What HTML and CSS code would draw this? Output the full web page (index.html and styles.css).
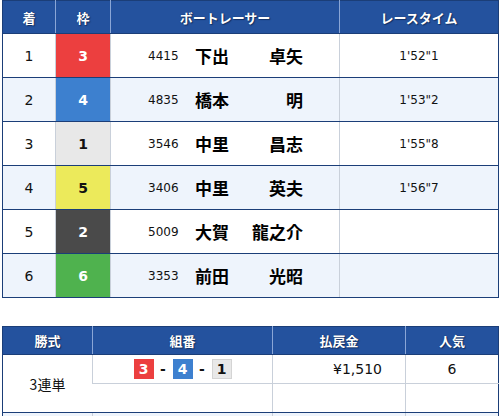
FILE: index.html
```html
<!DOCTYPE html>
<html lang="ja">
<head>
<meta charset="utf-8">
<link rel="stylesheet" href="styles.css">
</head>
<body>
<div class="page">
  <table class="result">
    <colgroup>
      <col class="c-rank"><col class="c-frame"><col class="c-racer"><col class="c-time">
    </colgroup>
    <thead>
      <tr><th>着</th><th>枠</th><th>ボートレーサー</th><th>レースタイム</th></tr>
    </thead>
    <tbody>
      <tr><td class="num">1</td><td class="frame f3">3</td><td class="racer"><span class="reg">4415</span><span class="name"><span>下出</span><span>卓矢</span></span></td><td class="time">1'52"1</td></tr>
      <tr class="alt"><td class="num">2</td><td class="frame f4">4</td><td class="racer"><span class="reg">4835</span><span class="name"><span>橋本</span><span>明</span></span></td><td class="time">1'53"2</td></tr>
      <tr><td class="num">3</td><td class="frame f1">1</td><td class="racer"><span class="reg">3546</span><span class="name"><span>中里</span><span>昌志</span></span></td><td class="time">1'55"8</td></tr>
      <tr class="alt"><td class="num">4</td><td class="frame f5">5</td><td class="racer"><span class="reg">3406</span><span class="name"><span>中里</span><span>英夫</span></span></td><td class="time">1'56"7</td></tr>
      <tr><td class="num">5</td><td class="frame f2">2</td><td class="racer"><span class="reg">5009</span><span class="name"><span>大賀</span><span>龍之介</span></span></td><td class="time"></td></tr>
      <tr class="alt"><td class="num">6</td><td class="frame f6">6</td><td class="racer"><span class="reg">3353</span><span class="name"><span>前田</span><span>光昭</span></span></td><td class="time"></td></tr>
    </tbody>
  </table>

  <table class="payout">
    <colgroup>
      <col class="p-type"><col class="p-combo"><col class="p-amount"><col class="p-pop">
    </colgroup>
    <thead>
      <tr><th>勝式</th><th>組番</th><th>払戻金</th><th>人気</th></tr>
    </thead>
    <tbody>
      <tr>
        <td class="type" rowspan="2">3連単</td>
        <td class="combo"><span class="box f3">3</span><span class="dash">-</span><span class="box f4">4</span><span class="dash">-</span><span class="box f1">1</span></td>
        <td class="amount">¥1,510</td>
        <td class="pop">6</td>
      </tr>
      <tr class="sub"><td class="combo"></td><td class="amount"></td><td class="pop"></td></tr>
    </tbody>
    <tbody>
      <tr class="alt">
        <td class="type" rowspan="2"></td>
        <td class="combo"></td>
        <td class="amount"></td>
        <td class="pop"></td>
      </tr>
      <tr class="alt sub"><td class="combo"></td><td class="amount"></td><td class="pop"></td></tr>
    </tbody>
  </table>
</div>
</body>
</html>
```

FILE: styles.css
```css
html, body {
  margin: 0;
  padding: 0;
  background: #fff;
}

.page {
  padding: 0 3px 0 2px;
  font-family: "DejaVu Sans", "Noto Sans CJK JP", sans-serif;
  color: #111;
}

table {
  width: 496px;
  border-collapse: collapse;
  table-layout: fixed;
  border: 1px solid #1b3e78;
}

th {
  height: 32px;
  padding: 0;
  font-family: "Noto Sans CJK JP", sans-serif;
  font-size: 13px;
  font-weight: 700;
  color: #fff;
  text-shadow: 0 0 1px #0d2550, 1px 1px 1px rgba(8, 30, 70, 0.6);
  background-color: #24519c;
  background-image: repeating-conic-gradient(#2d5eac 0 25%, #1c4690 0 50%);
  background-size: 2px 2px;
  border-left: 1px solid #8aa6d6;
  border-bottom: 1px solid #1b3e78;
  text-align: center;
  vertical-align: middle;
}

th:first-child { border-left: none; }

td {
  padding: 0;
  text-align: center;
  vertical-align: middle;
  border-left: 1px solid #c9d0da;
  border-bottom: 1px solid #1b3e78;
}

td:first-child { border-left: none; }

.alt td { background: #eef4fc; }

/* result table */
.c-rank { width: 53px; }
.c-frame { width: 55px; }
.c-racer { width: 229px; }
.c-time { width: 159px; }

.result tbody td { height: 43px; }

.num {
  font-size: 14px;
}

.frame {
  font-size: 14px;
  font-weight: 700;
  font-family: "DejaVu Sans", sans-serif;
}

.result .f1 { background: #e8e8e8; color: #111; }
.result .f2 { background: #4a4a4a; color: #fff; }
.result .f3 { background: #ec3f3f; color: #fff; }
.result .f4 { background: #3d80cf; color: #fff; }
.result .f5 { background: #ecea5b; color: #111; }
.result .f6 { background: #4fb24e; color: #fff; }

.racer {
  text-align: left;
}

.racer .reg {
  display: inline-block;
  width: 36px;
  margin-left: 37px;
  font-size: 12px;
  vertical-align: middle;
}

.racer .name {
  display: inline-flex;
  justify-content: space-between;
  width: 108px;
  margin-left: 11px;
  font-family: "Noto Sans CJK JP", sans-serif;
  font-size: 17px;
  font-weight: 700;
  color: #000;
  vertical-align: middle;
}

.time {
  font-size: 12px;
}

/* payout table */
.payout { margin-top: 28px; }

.payout th { height: 27px; }

.p-type { width: 90px; }
.p-combo { width: 180px; }
.p-amount { width: 133px; }
.p-pop { width: 93px; }

.payout tbody td { height: 28px; }

.payout tr:first-child td:not(.type) { border-bottom: 1px solid #c9d0da; }

.type {
  font-family: "Noto Sans CJK JP", sans-serif;
  font-size: 14px;
}

.combo {
  font-size: 0;
}

.box {
  display: inline-block;
  width: 20px;
  height: 20px;
  line-height: 20px;
  font-size: 14px;
  font-weight: 700;
  vertical-align: middle;
}

.payout .f1 { background: #e8e8e8; color: #111; border: 1px solid #d4d4d4; box-sizing: border-box; line-height: 18px; }
.payout .f3 { background: #ec3f3f; color: #fff; }
.payout .f4 { background: #3d80cf; color: #fff; }

.dash {
  display: inline-block;
  width: 19px;
  font-size: 14px;
  font-weight: 700;
  vertical-align: middle;
}

.amount {
  text-align: right;
  padding-right: 23px;
  font-size: 14px;
}

.pop {
  font-size: 14px;
}
```
